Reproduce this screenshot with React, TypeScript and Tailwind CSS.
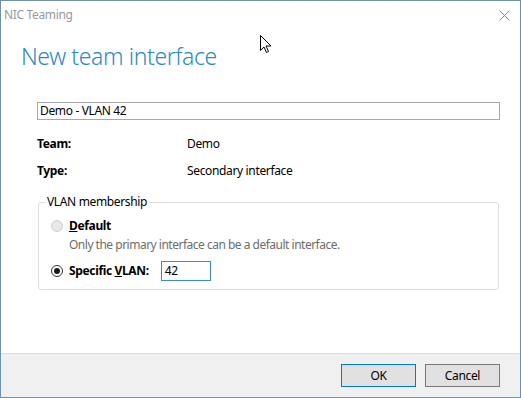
import React from "react";

export default function App() {
  return (
    <div
      className="relative w-[521px] h-[398px] bg-white border border-[#6f8fae] flex flex-col text-[12px] tracking-[-0.35px] text-black overflow-hidden"
      style={{ fontFamily: '"Noto Sans", "Segoe UI", sans-serif' }}
    >
      {/* Title bar */}
      <div className="h-[27px] flex items-center justify-between pl-[3px] pr-[10px]">
        <span className="text-[12px] text-[#9a9a9a] leading-none">NIC Teaming</span>
        <svg width="11" height="11" viewBox="0 0 11 11" className="mt-[1px]">
          <path d="M0.5 0.5 L10.5 10.5 M10.5 0.5 L0.5 10.5" stroke="#8a8a8a" strokeWidth="1" />
        </svg>
      </div>

      {/* Heading */}
      <div className="pl-[20px] mt-[12px] h-[32px] flex items-center">
        <span className="text-[23px] font-light text-[#2b8ac4] leading-none tracking-[-0.4px]">New team interface</span>
      </div>

      {/* Body */}
      <div className="pl-[36px] pr-[20px] mt-[30px] flex flex-col">
        <div className="h-[18px] border border-[#a8a8a8] flex items-center pl-[2px] w-[463px]">
          <span className="leading-none">Demo - VLAN 42</span>
        </div>

        <div className="flex items-center mt-[15px] h-[18px]">
          <span className="w-[150px] font-bold">Team:</span>
          <span>Demo</span>
        </div>
        <div className="flex items-center mt-[9px] h-[18px]">
          <span className="w-[150px] font-bold">Type:</span>
          <span>Secondary interface</span>
        </div>

        {/* Group box */}
        <div className="relative mt-[22px] ml-[1px] w-[461px] h-[88px] border border-[#d9dfe5] rounded-[3px]">
          <span className="absolute left-[6px] -top-[9px] bg-white px-[2px] leading-[16px]">VLAN membership</span>
          <div className="flex flex-col pt-[14px] pl-[12px]">
            <div className="flex items-center h-[18px]">
              <span className="w-[12px] h-[12px] rounded-full border border-[#cfcfcf] bg-[#e8e8e8]" />
              <span className="ml-[6px] font-bold"><span className="underline">D</span>efault</span>
            </div>
            <div className="pl-[18px] mt-[1px] h-[18px] flex items-center text-[#6d6d6d] tracking-[-0.5px]">
              Only the primary interface can be a default interface.
            </div>
            <div className="flex items-center h-[20px] mt-[7px]">
              <span className="w-[12px] h-[12px] rounded-full border border-[#333] bg-white flex items-center justify-center">
                <span className="w-[6px] h-[6px] rounded-full bg-[#1a1a1a]" />
              </span>
              <span className="ml-[6px] font-bold">Specific <span className="underline">V</span>LAN:</span>
              <div className="ml-[12px] w-[50px] h-[20px] border border-[#3c8ad8] flex items-center pl-[3px]">
                <span className="leading-none">42</span>
              </div>
            </div>
          </div>
        </div>
      </div>

      <div className="flex-1" />

      {/* Footer */}
      <div className="h-[44px] bg-[#f0f0f0] border-t border-[#dcdcdc] flex justify-end items-start pt-[10px] pr-[20px] gap-[9px]">
        <button className="w-[75px] h-[23px] bg-[#e1e1e1] border border-[#0078d7] flex items-center justify-center leading-none">
          OK
        </button>
        <button className="w-[75px] h-[23px] bg-[#e1e1e1] border border-[#7a7a7a] flex items-center justify-center leading-none">
          Cancel
        </button>
      </div>

      {/* Mouse cursor overlay */}
      <svg className="absolute left-[259px] top-[34px]" width="12" height="19" viewBox="0 0 12 19">
        <path
          d="M0.5 0.5 L0.5 15.5 L4 12 L6.5 17.5 L8.5 16.5 L6 11 L11 11 Z"
          fill="white"
          stroke="black"
          strokeWidth="1"
          strokeLinejoin="miter"
        />
      </svg>
    </div>
  );
}
